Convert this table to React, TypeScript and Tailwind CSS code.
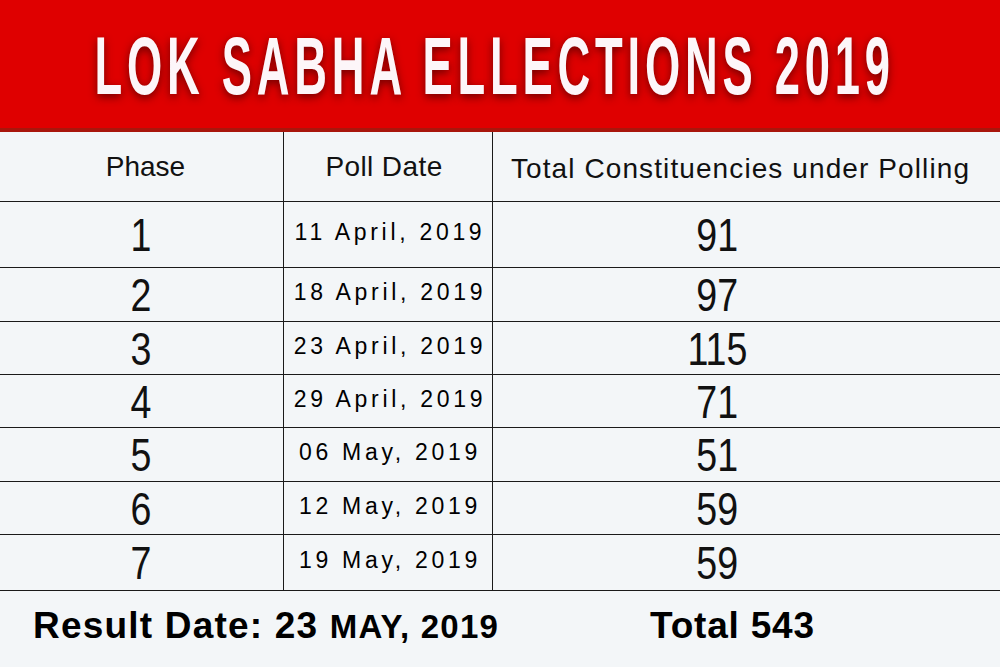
const phases = [
  { phase: "1", date: "11 April, 2019", seats: "91", h: "h-[66px]" },
  { phase: "2", date: "18 April, 2019", seats: "97", h: "h-[54px]" },
  { phase: "3", date: "23 April, 2019", seats: "115", h: "h-[53px]" },
  { phase: "4", date: "29 April, 2019", seats: "71", h: "h-[53px]" },
  { phase: "5", date: "06 May, 2019", seats: "51", h: "h-[54px]" },
  { phase: "6", date: "12 May, 2019", seats: "59", h: "h-[53px]" },
  { phase: "7", date: "19 May, 2019", seats: "59", h: "h-[56px]" },
];

function BigNum({ children }: { children: string }) {
  return (
    <span className="inline-block scale-x-[0.8] text-[47px] leading-none">
      {children}
    </span>
  );
}

export default function App() {
  return (
    <div className="h-[667px] w-[1000px] overflow-hidden bg-[#f3f6f8] font-['Liberation_Sans',Arial,sans-serif] text-[#111]">
      <header className="flex h-[132px] items-center justify-center overflow-hidden border-b-4 border-[#a8160c] bg-[#df0000] pr-[10px] pt-1">
        <h1 className="shrink-0 scale-x-[0.56] whitespace-nowrap text-[81px] font-bold leading-none tracking-[8.5px] text-[#fdf6f9] [text-shadow:0_3px_12px_rgba(90,0,0,0.85)]">
          LOK SABHA ELLECTIONS 2019
        </h1>
      </header>

      <div className="grid grid-cols-[283px_209px_1fr]">
        <div className="flex h-[70px] items-center justify-center border-b border-[#1a1a1a] pl-2 text-[28px]">
          Phase
        </div>
        <div className="flex h-[70px] items-center justify-center border-b border-l border-[#1a1a1a] pr-2 text-[28px] tracking-[0.4px]">
          Poll Date
        </div>
        <div className="flex h-[70px] items-center justify-center border-b border-l border-[#1a1a1a] pr-3 pt-1 text-[28px] tracking-[1.1px]">
          Total Constituencies under Polling
        </div>

        {phases.map((p) => (
          <div key={p.phase} className="contents">
            <div className={`flex items-center justify-center border-b border-[#1a1a1a] ${p.h}`}>
              <BigNum>{p.phase}</BigNum>
            </div>
            <div className={`flex items-center justify-center border-b border-l border-[#1a1a1a] pb-1 pl-1 text-[23px] tracking-[3.7px] text-black ${p.h}`}>
              {p.date}
            </div>
            <div className={`flex items-center justify-center border-b border-l border-[#1a1a1a] pr-[58px] ${p.h}`}>
              <BigNum>{p.seats}</BigNum>
            </div>
          </div>
        ))}
      </div>

      <footer className="flex h-[76px] items-center pb-2 font-bold leading-none tracking-[1.2px] text-black">
        <div className="w-[650px] pl-[33px] text-[37px]">
          Result Date: 23 <span className="text-[33px]">MAY, 2019</span>
        </div>
        <div className="text-[37px] tracking-[0.8px]">Total 543</div>
      </footer>
    </div>
  );
}
